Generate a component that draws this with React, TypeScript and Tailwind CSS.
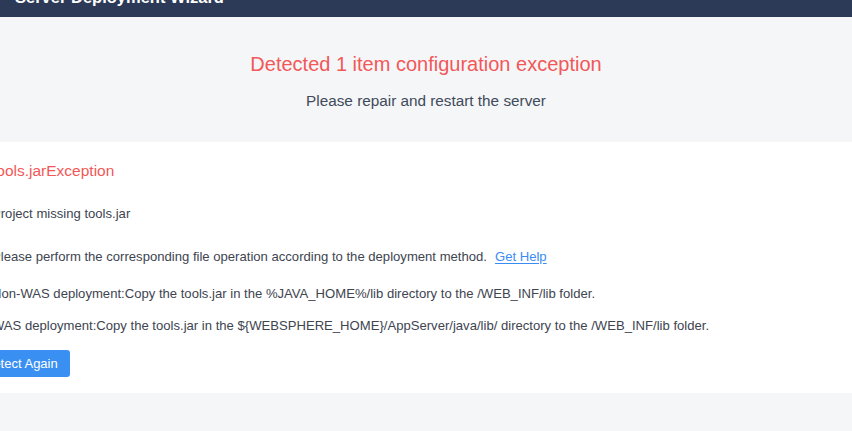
import React from 'react';

const App: React.FC = () => {
  return (
    <div className="w-[852px] h-[431px] overflow-hidden bg-[#f5f6f8] font-['Liberation_Sans',Arial,sans-serif]">
      {/* Header (scrolled partly out of view) */}
      <div className="h-[17px] overflow-hidden bg-[#2c3a57]">
        <h1 className="-mt-[12px] pl-[15px] text-[16.5px] leading-[18px] font-bold text-white whitespace-nowrap">
          Server Deployment Wizard
        </h1>
      </div>

      {/* Summary */}
      <div className="h-[125px] flex flex-col items-center pt-[33px]">
        <div className="text-[20px] leading-[28px] text-[#f25858]">Detected 1 item configuration exception</div>
        <div className="mt-[13px] text-[15.3px] leading-[20px] text-[#3f4a5a]">Please repair and restart the server</div>
      </div>

      {/* Exception detail */}
      <div className="h-[251px] bg-white">
        <div className="-ml-[8px] pt-[19px] text-[13.1px] leading-[20px] text-[#3e4450] whitespace-nowrap">
          <div className="text-[15.5px] text-[#f25858]">tools.jarException</div>
          <div className="mt-[23px]">Project missing tools.jar</div>
          <div className="mt-[23px] flex items-center gap-[8px]">
            <span>Please perform the corresponding file operation according to the deployment method.</span>
            <a href="#" className="text-[#3b8cf2] underline underline-offset-2">Get Help</a>
          </div>
          <div className="mt-[17px]">Non-WAS deployment:Copy the tools.jar in the %JAVA_HOME%/lib directory to the /WEB_INF/lib folder.</div>
          <div className="mt-[12px]">WAS deployment:Copy the tools.jar in the {'${WEBSPHERE_HOME}'}/AppServer/java/lib/ directory to the /WEB_INF/lib folder.</div>
          <button className="mt-[14px] -ml-[20px] h-[27px] px-[12px] rounded-[3px] bg-[#3a8ff2] text-white text-[13px]">
            Detect Again
          </button>
        </div>
      </div>
    </div>
  );
};

export default App;
